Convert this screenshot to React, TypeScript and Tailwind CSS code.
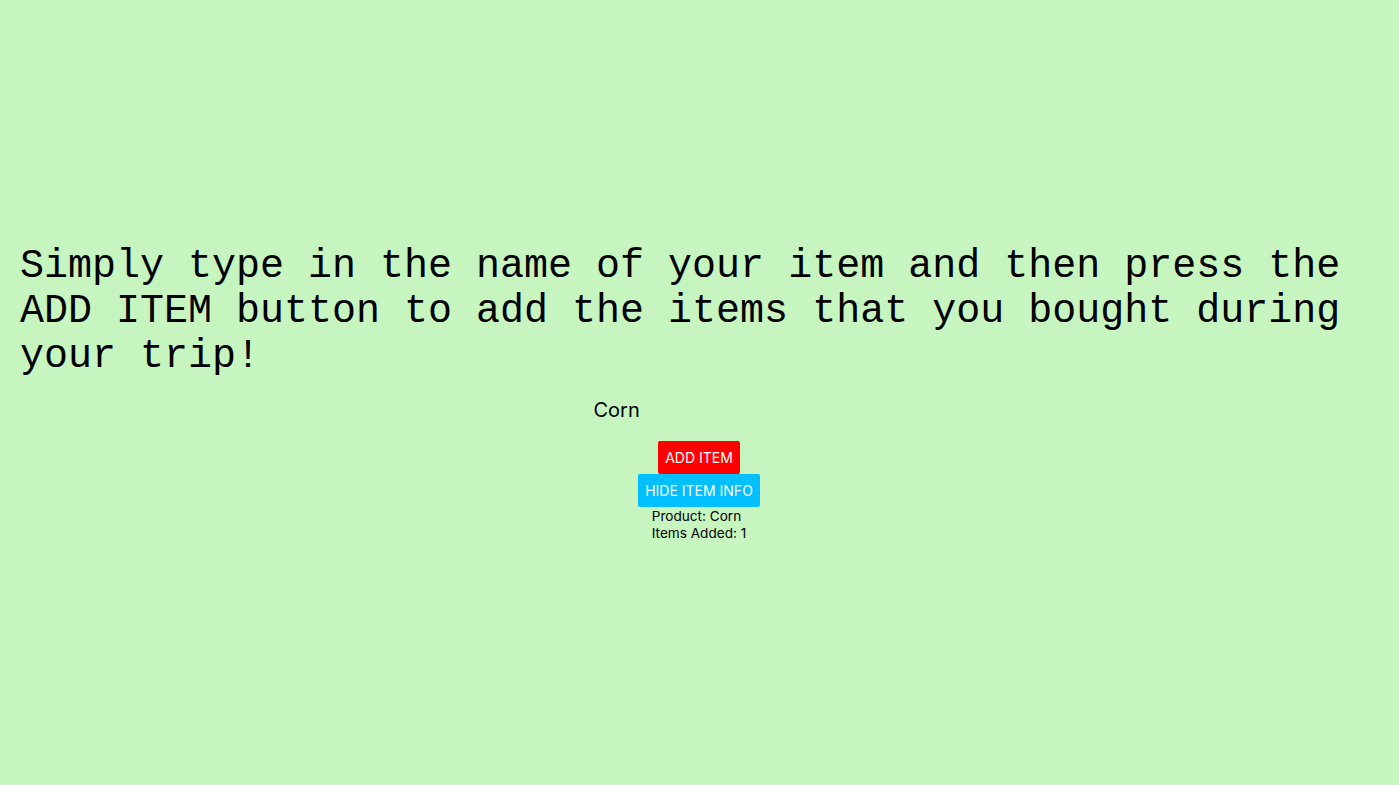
import React, { useState } from "react";

export default function App() {
  const [value, setValue] = useState("Corn");
  const [show, setShow] = useState(true);
  return (
    <div className="min-h-screen w-full bg-[#c7f5c0] flex flex-col justify-center">
      <h1
        className="m-0 px-[20px] text-[40px] leading-[45px] font-normal text-black"
        style={{ fontFamily: '"Liberation Mono", "Courier New", monospace' }}
      >
        Simply type in the name of your item and then press the ADD ITEM button to add the items that you bought during your trip!
      </h1>
      <div
        className="flex flex-col items-center pr-[1px]"
        style={{ fontFamily: 'Inter, "Noto Sans", sans-serif' }}
      >
        <input
          value={value}
          onChange={(e) => setValue(e.target.value)}
          className="mt-[16px] mb-[16px] h-[30px] w-[215px] bg-transparent border-0 outline-none px-[2px] text-[20px] text-black"
        />
        <button className="h-[33px] w-[82px] bg-[#ff0000] text-white text-[14px] rounded-[2px] border-0 flex items-center justify-center">
          ADD ITEM
        </button>
        <button
          onClick={() => setShow(!show)}
          className="h-[33px] w-[122px] bg-[#00bfff] text-white text-[14px] rounded-[2px] border-0 flex items-center justify-center"
        >
          HIDE ITEM INFO
        </button>
        {show && (
          <div className="mt-[1px] text-[13.6px] leading-[17px] text-black text-left">
            <div>Product: Corn</div>
            <div>Items Added: 1</div>
          </div>
        )}
      </div>
    </div>
  );
}
